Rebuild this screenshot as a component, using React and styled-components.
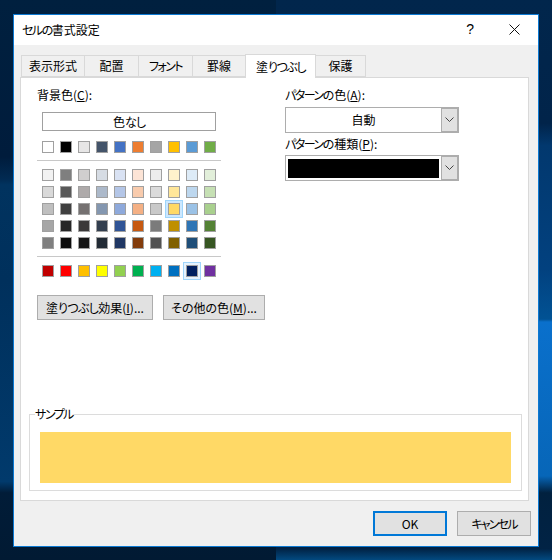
import React from "react";
import styled, { createGlobalStyle } from "styled-components";

const GlobalStyle = createGlobalStyle`
  html, body {
    margin: 0;
    padding: 0;
    height: 100%;
    background: #012a52;
  }
  * { box-sizing: border-box; }
`;

// desktop wallpaper behind the dialog, left and right halves differ
const Desktop = styled.div`
  width: 552px;
  height: 560px;
  overflow: hidden;
  padding: 14px 13px 13px 13px;
  background:
    linear-gradient(180deg, #00203f 0%, #001c3c 28%, #012a52 32%, #01335f 33%, #00305c 50%, #013a6c 86%, #011c38 88%, #011a33 100%) left / 50% 100% no-repeat,
    linear-gradient(180deg, #01264c 0%, #01244a 22%, #02386e 26%, #02417f 48%, #015294 57%, #0a70cc 57.5%, #0766b8 85%, #01213f 88%, #012345 98%, #024a80 100%) right / 50% 100% no-repeat;
  font-family: "Noto Sans CJK JP", "Liberation Sans", sans-serif;
  font-feature-settings: "palt";
  font-size: 12px;
  color: #000;
`;

// kana sit tighter than kanji in the dialog font
const Kana = styled.span`
  letter-spacing: ${(p) => p.$s || -1.5}px;
`;

const Dialog = styled.div`
  width: 526px;
  height: 533px;
  border: 1px solid #0c79d2;
  background: #f0f0f0;
  display: flex;
  flex-direction: column;
`;

const TitleBar = styled.div`
  height: 30px;
  flex: none;
  background: #fff;
  display: flex;
  align-items: center;
  padding: 0 18px 2px 8px;
  font-size: 12px;
`;

const Title = styled.div`
  flex: 1;
`;

const HelpMark = styled.span`
  font-family: "Liberation Sans", sans-serif;
  font-size: 14px;
  margin-right: 35px;
`;

const TabStrip = styled.div`
  display: flex;
  align-items: flex-end;
  height: 32px;
  flex: none;
  padding-left: 8px;
`;

const Tab = styled.div`
  width: ${(p) => p.$w}px;
  height: ${(p) => (p.$active ? 24 : 22)}px;
  margin-left: -1px;
  padding-bottom: 1px;
  display: flex;
  align-items: center;
  justify-content: center;
  background: ${(p) => (p.$active ? "#fff" : "#f0f0f0")};
  border: 1px solid #d9d9d9;
  border-bottom: ${(p) => (p.$active ? "none" : "1px solid #d9d9d9")};
  margin-bottom: ${(p) => (p.$active ? -1 : 0)}px;
  position: relative;
  z-index: ${(p) => (p.$active ? 1 : 0)};
`;

const Panel = styled.div`
  margin-left: 6px;
  width: 509px;
  height: 424px;
  flex: none;
  background: #fff;
  border: 1px solid #d9d9d9;
  display: flex;
  flex-direction: column;
`;

const Columns = styled.div`
  display: flex;
  padding-left: 16px;
  padding-top: 9px;
`;

const LeftColumn = styled.div`
  width: 248px;
`;

const RightColumn = styled.div`
  width: 174px;
`;

const Label = styled.div`
  height: 16px;
  line-height: 16px;
  white-space: nowrap;
`;

const NoColorButton = styled.div`
  margin: 9px 0 0 5px;
  width: 174px;
  height: 19px;
  padding-bottom: 1px;
  border: 1px solid #a0a0a0;
  display: flex;
  align-items: center;
  justify-content: center;
`;

const SwatchGrid = styled.div`
  display: grid;
  grid-template-columns: repeat(10, 12px);
  column-gap: 6px;
  row-gap: 5px;
  margin: ${(p) => p.$top || 0}px 0 0 5px;
`;

const Swatch = styled.div`
  width: 12px;
  height: 12px;
  background: ${(p) => p.$color};
  border: 1px solid #a0a0a0;
  box-shadow: ${(p) =>
    p.$selected ? `0 0 0 2px ${p.$selected}, 0 0 0 3px #9fd5fb` : "none"};
`;

const Separator = styled.div`
  width: 184px;
  height: 1px;
  background: #c8c8c8;
  margin: 7px 0 8px;
`;

const ActionRow = styled.div`
  display: flex;
  gap: 10px;
  margin-top: 18px;
`;

const Button = styled.div`
  width: ${(p) => p.$w}px;
  height: 25px;
  padding-bottom: 1px;
  background: #e1e1e1;
  border: ${(p) => (p.$primary ? "2px solid #0078d7" : "1px solid #adadad")};
  display: flex;
  align-items: center;
  justify-content: center;
  white-space: nowrap;
`;

const Combo = styled.div`
  width: 174px;
  height: 26px;
  margin: ${(p) => p.$top}px 0 ${(p) => p.$bottom}px;
  display: flex;
  background: #fff;
  border: 1px solid #adadad;
`;

const ComboValue = styled.div`
  flex: 1;
  display: flex;
  align-items: center;
  justify-content: center;
  padding: 2px 2px 3px;
`;

const BlackFill = styled.div`
  width: 100%;
  height: 100%;
  margin-top: 1px;
  background: #000;
`;

const ComboArrow = styled.div`
  width: 17px;
  background: #e1e1e1;
  border: 1px solid #adadad;
  display: flex;
  align-items: center;
  justify-content: center;
`;

const SampleGroup = styled.fieldset`
  margin: auto 6px 9px 8px;
  padding: 0 10px 7px 10px;
  border: 1px solid #dcdcdc;
  height: 84px;
  min-width: 0;
`;

const SampleLegend = styled.legend`
  margin-left: -5px;
  padding: 0 1px 0 0;
  height: 14px;
  line-height: 14px;
`;

const SampleFill = styled.div`
  height: 51px;
  margin-top: 11px;
  background: #ffd966;
`;

const Footer = styled.div`
  flex: 1;
  display: flex;
  justify-content: flex-end;
  align-items: flex-start;
  gap: 10px;
  padding: 10px 7px 0 0;
`;

const themeColors = ["#ffffff", "#000000", "#e7e6e6", "#44546a", "#4472c4", "#ed7d31", "#a5a5a5", "#ffc000", "#5b9bd5", "#70ad47"];

const tints = [
  "#f2f2f2", "#7f7f7f", "#d0cece", "#d6dce4", "#d9e2f3", "#fce4d6", "#ededed", "#fff2cc", "#ddebf7", "#e2efda",
  "#d9d9d9", "#595959", "#aeaaaa", "#acb9ca", "#b4c6e7", "#f8cbad", "#dbdbdb", "#ffe699", "#bdd7ee", "#c6e0b4",
  "#bfbfbf", "#404040", "#757171", "#8497b0", "#8ea9db", "#f4b084", "#c9c9c9", "#ffd966", "#9bc2e6", "#a9d08e",
  "#a6a6a6", "#262626", "#3a3838", "#333f4f", "#305496", "#c65911", "#7b7b7b", "#bf8f00", "#2f75b5", "#548235",
  "#808080", "#0d0d0d", "#161616", "#222b35", "#203764", "#833c0c", "#525252", "#806000", "#1f4e78", "#375623",
];

const standardColors = ["#c00000", "#ff0000", "#ffc000", "#ffff00", "#92d050", "#00b050", "#00b0f0", "#0070c0", "#002060", "#7030a0"];

const tabs = [
  { name: "表示形式", w: 64 },
  { name: "配置", w: 55 },
  { name: <Kana>フォント</Kana>, id: "font", w: 55 },
  { name: "罫線", w: 54 },
  { name: <><span>塗</span><Kana>りつぶし</Kana></>, id: "fill", w: 71, active: true },
  { name: "保護", w: 51 },
];

function Chevron() {
  return (
    <svg width="9" height="6" viewBox="0 0 9 6">
      <path d="M0.5 0.5 L4.5 4.5 L8.5 0.5" fill="none" stroke="#444" strokeWidth="1" />
    </svg>
  );
}

export default function App() {
  return (
    <Desktop>
      <GlobalStyle />
      <Dialog>
        <TitleBar>
          <Title><Kana>セルの</Kana>書式設定</Title>
          <HelpMark>?</HelpMark>
          <svg width="11" height="11" viewBox="0 0 11 11">
            <path d="M0.5 0.5 L10.5 10.5 M10.5 0.5 L0.5 10.5" stroke="#111" strokeWidth="1" />
          </svg>
        </TitleBar>
        <TabStrip>
          {tabs.map((tab) => (
            <Tab key={tab.id || tab.name} $w={tab.w} $active={tab.active}>
              {tab.name}
            </Tab>
          ))}
        </TabStrip>
        <Panel>
          <Columns>
            <LeftColumn>
              <Label>背景色(<u>C</u>):</Label>
              <NoColorButton><span>色<Kana $s={-1}>なし</Kana></span></NoColorButton>
              <SwatchGrid $top={10}>
                {themeColors.map((c) => (
                  <Swatch key={c} $color={c} />
                ))}
              </SwatchGrid>
              <Separator />
              <SwatchGrid>
                {tints.map((c) => (
                  <Swatch key={c} $color={c} $selected={c === "#ffd966" ? "#cce8ff" : null} />
                ))}
              </SwatchGrid>
              <Separator />
              <SwatchGrid>
                {standardColors.map((c) => (
                  <Swatch key={c} $color={c} $selected={c === "#002060" ? "#e5f3ff" : null} />
                ))}
              </SwatchGrid>
              <ActionRow>
                <Button $w={116}><span>塗<Kana $s={-0.7}>りつぶし</Kana>効果(<u>I</u>)...</span></Button>
                <Button $w={102}>その他の色(<u>M</u>)...</Button>
              </ActionRow>
            </LeftColumn>
            <RightColumn>
              <Label><Kana>パターン</Kana>の色(<u>A</u>):</Label>
              <Combo $top={4} $bottom={3}>
                <ComboValue>自動</ComboValue>
                <ComboArrow><Chevron /></ComboArrow>
              </Combo>
              <Label><Kana>パターン</Kana>の種類(<u>P</u>):</Label>
              <Combo $top={3} $bottom={0}>
                <ComboValue><BlackFill /></ComboValue>
                <ComboArrow><Chevron /></ComboArrow>
              </Combo>
            </RightColumn>
          </Columns>
          <SampleGroup>
            <SampleLegend><Kana>サンプル</Kana></SampleLegend>
            <SampleFill />
          </SampleGroup>
        </Panel>
        <Footer>
          <Button $w={74} $primary>OK</Button>
          <Button $w={74}><Kana $s={-1.8}>キャンセル</Kana></Button>
        </Footer>
      </Dialog>
    </Desktop>
  );
}
